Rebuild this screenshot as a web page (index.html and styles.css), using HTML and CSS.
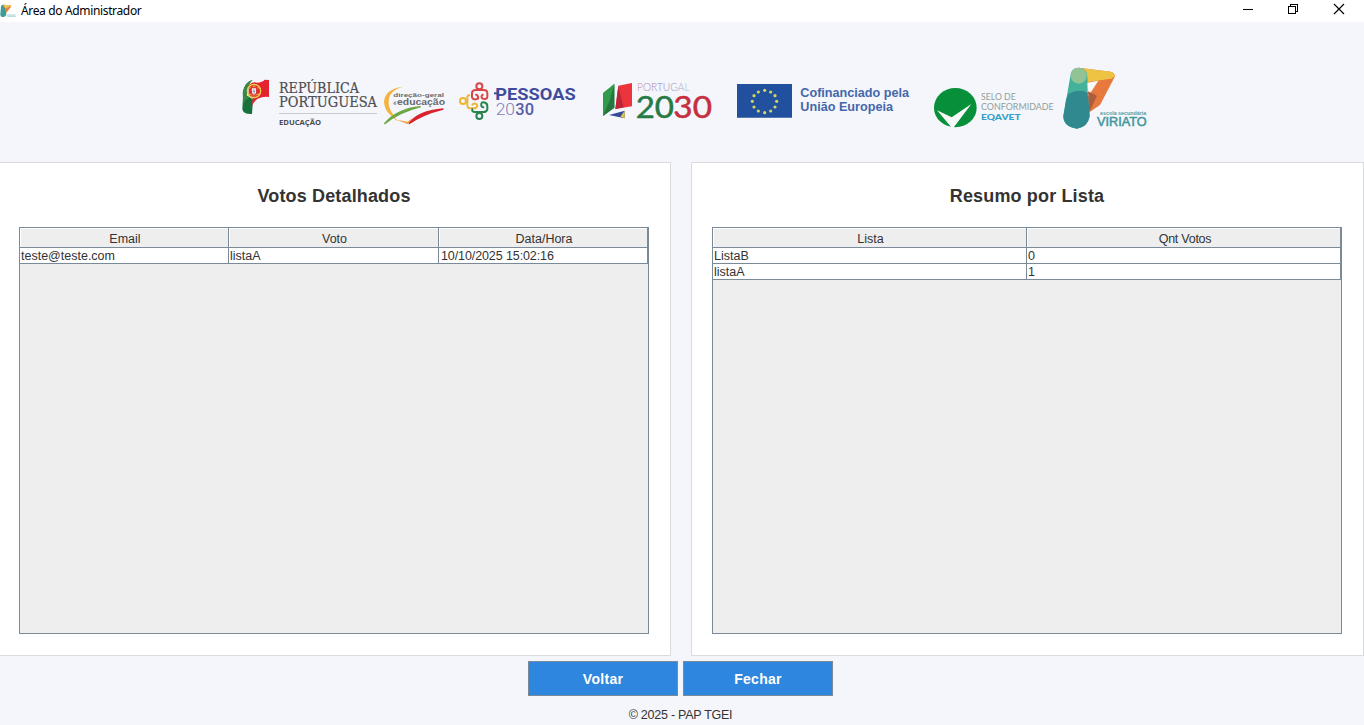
FILE: index.html
```html
<!DOCTYPE html>
<html lang="pt">
<head>
<meta charset="utf-8">
<title>Área do Administrador</title>
<link rel="stylesheet" href="styles.css">
</head>
<body>
<div class="window">
  <header class="titlebar">
    <svg class="app-icon" viewBox="0 0 48 48">
      <path d="M3 17Q4 11 9 11L16 12 19 42Q14 50 6 48 0 46 1 38Z" fill="#3a9c9b"/>
      <path d="M9 11L32 13Q34 15 32 19L18 37 15 23Z" fill="#e8803f"/>
      <path d="M9 11L31 13Q33 15 29 17L16 22Z" fill="#edc54c"/>
      <path d="M21 42H47M22 46H47" stroke="#80bfc4" stroke-width="2"/>
    </svg>
    <span class="title">Área do Administrador</span>
    <svg class="controls" viewBox="0 0 144 22" shape-rendering="crispEdges">
      <path d="M23 9.500H33" stroke="#000"/>
      <path d="M68.500 6.500H75.500V13.500H68.500ZM70.500 6V4.500H77.500V11.500H76" fill="none" stroke="#000"/>
      <path d="M114 4L124 14M124 4L114 14" stroke="#000" stroke-width="1.200" shape-rendering="auto"/>
    </svg>
  </header>

  <div class="logos">
    <svg class="logo republica" viewBox="30 0 426 210">
      <path d="M68 44Q46 50 40 77L37 132Q38 148 66 147L69 103 49 91 56 58Z" fill="#17713c"/>
      <path d="M68 44Q59 50 58 64L50 82Q49 96 58 99Q45 103 40 119L38 82Q44 51 68 44Z" fill="#398846"/>
      <path d="M56 62Q66 49 80 53 98 52 104 44L117 45V96Q100 93 83 101 74 106 66 123L68 100 56 92Z" fill="#e42330"/>
      <circle cx="72" cy="78" r="20" fill="none" stroke="#e9d34b" stroke-width="4"/>
      <path d="M54 70Q72 61 90 70M54 85Q72 96 90 85M72 58V98" fill="none" stroke="#d9c24d" stroke-width="3"/>
      <path d="M62 66H82V82Q80 92 72 93 63 91 62 82Z" fill="#df3b3f"/>
      <path d="M66 70H78V82Q77 88 72 89 67 88 66 82Z" fill="#f5eef0"/>
      <path d="M72 73V86M68 79H76" stroke="#68749b" stroke-width="2"/>
      <g class="slab">
        <text x="147" y="84" font-size="42" textLength="240" lengthAdjust="spacingAndGlyphs">REPÚBLICA</text>
        <text x="147" y="125" font-size="42" textLength="294" lengthAdjust="spacingAndGlyphs">PORTUGUESA</text>
      </g>
      <path d="M147 145.500H441" stroke="#b4b4b8" stroke-width="2"/>
      <text class="sans-semi" x="147" y="181" font-size="21" fill="#4b4b4d" textLength="126" lengthAdjust="spacingAndGlyphs">EDUCAÇÃO</text>
    </svg>

    <svg class="logo dge" viewBox="456 0 219 210">
      <path d="M518 65Q466 72 462 109 463 133 479 148L503 170 487 145Q472 124 477 100 482 76 518 65Z" fill="#f5b23c"/>
      <path d="M463 177Q501 131 572 125 505 142 463 177Z" fill="#6aa842" stroke="#6aa842" stroke-width="4"/>
      <path d="M500 164L534 178 548 158 533 170Z" fill="#f2a044"/>
      <path d="M537 176Q564 138 640 132 579 147 537 176Z" fill="#d9232e" stroke="#d9232e" stroke-width="4"/>
      <g class="arial-bold" fill="#68686b">
        <text x="490" y="97" font-size="18" textLength="152" lengthAdjust="spacingAndGlyphs">direção-geral</text>
        <text x="501" y="121" font-size="25" textLength="144" lengthAdjust="spacingAndGlyphs">educação</text>
        <text transform="translate(499 121) rotate(-90)" font-size="10">da</text>
      </g>
    </svg>

    <svg class="logo pessoas" viewBox="15 0 420 210">
      <g fill="none" stroke-width="6" stroke-linecap="round">
        <g stroke="#dc4545"><circle cx="88" cy="64" r="9"/><path d="M84 101Q70 107 66 97V83Q67 75 77 75H101Q112 75 112 85V96Q110 105 98 101 91 95 98 89M84 101Q86 92 78 89"/></g>
        <g stroke="#efb534"><circle cx="39" cy="108" r="9"/><path d="M58 91Q50 91 52 101V120Q52 131 63 130H75Q84 126 81 119 75 112 67 119"/></g>
        <g stroke="#27854b"><circle cx="88" cy="153" r="9"/><path d="M94 116Q97 109 107 114 113 117 112 128V133Q109 142 98 141H73Q65 140 67 133M94 116Q92 126 100 127"/></g>
      </g>
      <text class="roboto-bold" x="136" y="104" font-size="52" fill="#414b9c" textLength="241" lengthAdjust="spacingAndGlyphs">PESSOAS</text>
      <path d="M132 85H147" stroke="#414b9c" stroke-width="6"/>
      <text class="roboto-light" x="137" y="150" font-size="48" fill="#7d83b9" textLength="58" lengthAdjust="spacingAndGlyphs">20</text>
      <text class="roboto-medium" x="196" y="150" font-size="48" fill="#535ca5" textLength="56" lengthAdjust="spacingAndGlyphs">30</text>
    </svg>

    <svg class="logo p2030" viewBox="15 0 390 210">
      <path d="M39 84L73 56V128L39 153Z" fill="#319b4b"/>
      <path d="M73 56V128L39 153 59 107Z" fill="#26763f"/>
      <path d="M85 62L126 54V124L76 132Z" fill="#ec343d"/>
      <path d="M85 62L101 127 76 132Z" fill="#bd2638"/>
      <path d="M57 150L104 137V160Z" fill="#354a9a"/>
      <path d="M104 137V160L91 155Z" fill="#e5c245"/>
      <linearGradient id="ink" x1="0" x2="1"><stop stop-color="#c88f9c"/><stop offset=".45" stop-color="#8f84b8"/><stop offset="1" stop-color="#b7bbd0"/></linearGradient>
      <text class="lato-light" x="141" y="77" font-size="33" fill="url(#ink)" textLength="158" lengthAdjust="spacingAndGlyphs">PORTUGAL</text>
      <text class="lato" x="137" y="160" font-size="94" fill="#267a44" stroke="#267a44" stroke-width="1.500" textLength="115" lengthAdjust="spacingAndGlyphs">20</text>
      <text class="lato" x="250" y="160" font-size="94" fill="#c52f40" stroke="#c52f40" stroke-width="1.500" textLength="116" lengthAdjust="spacingAndGlyphs">30</text>
    </svg>

    <svg class="logo eu" viewBox="0 0 600 210">
      <path d="M36 57H201V158H36Z" fill="#21509f"/>
      <g fill="#d6d55b">
        <circle cx="119" cy="76" r="4.800"/><circle cx="137" cy="81" r="4.800"/><circle cx="150" cy="92" r="4.800"/><circle cx="155" cy="109" r="4.800"/><circle cx="150" cy="126" r="4.800"/><circle cx="137" cy="138" r="4.800"/><circle cx="119" cy="143" r="4.800"/><circle cx="100" cy="138" r="4.800"/><circle cx="87" cy="126" r="4.800"/><circle cx="82" cy="109" r="4.800"/><circle cx="87" cy="92" r="4.800"/><circle cx="100" cy="81" r="4.800"/>
      </g>
      <g class="arial-bold eu-text" fill="#4467ac" font-size="36">
        <text x="226" y="97" textLength="326" lengthAdjust="spacingAndGlyphs">Cofinanciado pela</text>
        <text x="226" y="138" textLength="278" lengthAdjust="spacingAndGlyphs">União Europeia</text>
      </g>
    </svg>

    <svg class="logo eqavet" viewBox="0 15 405 210">
      <ellipse cx="91" cy="143" rx="64" ry="59" fill="#079039"/>
      <path d="M36 151L80 172 139 132 87 201 79 202Z" fill="#f7faf9"/>
      <g class="lato" fill="#8fa09b" font-size="26">
        <text x="168" y="120" textLength="104" lengthAdjust="spacingAndGlyphs">SELO DE</text>
        <text x="168" y="150" textLength="218" lengthAdjust="spacingAndGlyphs">CONFORMIDADE</text>
      </g>
      <text class="lato-black" x="168" y="180" font-size="25" fill="#359fc9" textLength="119" lengthAdjust="spacingAndGlyphs">EQAVET</text>
    </svg>

    <svg class="logo viriato" viewBox="405 15 288 210">
      <path d="M461 23L557 35Q571 38 569 51L525 135 493 157 486 70 461 70Z" fill="#e8793e"/>
      <path d="M461 23L557 35Q568 38 569 47 565 56 552 57L462 70Z" fill="#edc343"/>
      <path d="M437 43Q440 24 461 23 486 25 487 49L494 169Q488 202 456 206 416 201 415 169Z" fill="#43b29b"/>
      <path d="M430 102Q460 84 489 98L494 169Q488 202 456 206 416 201 415 169L423 119Z" fill="#30898e"/>
      <path d="M487 68L520 62 489 110Z" fill="#f8faf9"/>
      <path d="M489 94L516 107 493 157Z" fill="#ad5d3d"/>
      <circle cx="461" cy="47" r="24" fill="#91c395"/>
      <text class="arial-bold" x="525" y="164" font-size="14" fill="#539ca0" textLength="139" lengthAdjust="spacingAndGlyphs">escola secundária</text>
      <text class="viriato-name" x="516" y="198" font-size="37" textLength="149" lengthAdjust="spacingAndGlyphs">VIRIATO</text>
    </svg>
  </div>

  <main class="panels">
    <section class="panel panel-left">
      <h2>Votos Detalhados</h2>
      <div class="table-view">
        <div class="grid three">
          <div class="th">Email</div><div class="th">Voto</div><div class="th">Data/Hora</div>
          <div class="td">teste@teste.com</div><div class="td">listaA</div><div class="td date">10/10/2025 15:02:16</div>
        </div>
      </div>
    </section>
    <section class="panel panel-right">
      <h2>Resumo por Lista</h2>
      <div class="table-view">
        <div class="grid two">
          <div class="th">Lista</div><div class="th votes">Qnt Votos</div>
          <div class="td">ListaB</div><div class="td">0</div>
          <div class="td">listaA</div><div class="td">1</div>
        </div>
      </div>
    </section>
  </main>

  <div class="actions">
    <button class="btn">Voltar</button>
    <button class="btn">Fechar</button>
  </div>
  <footer class="footer">© 2025 - PAP TGEI</footer>
</div>
</body>
</html>
```

FILE: styles.css
```css
* { box-sizing: border-box; }
body { margin: 0; background: #f4f6fb; }
.window {
  width: 1364px;
  height: 725px;
  overflow: hidden;
  display: flex;
  flex-direction: column;
  background: #f4f6fb;
  color: #333;
  font: 12.5px/15px "Liberation Sans", Arial, sans-serif;
}
.titlebar {
  height: 22px;
  flex: none;
  display: flex;
  background: #fff;
  color: #000;
}
.app-icon { width: 16px; height: 16px; margin-top: 1px; }
.title {
  margin-left: 5px;
  flex: 1;
  font: 12px/22px "Noto Sans", "Open Sans", sans-serif;
  letter-spacing: -0.35px;
}
.controls { width: 144px; height: 22px; }
.logos {
  height: 140px;
  flex: none;
  display: flex;
  padding: 43px 0 0 240px;
}
.logo { height: 70px; flex: none; }
.republica { width: 142px; }
.dge { width: 73px; }
.pessoas { width: 140px; }
.p2030 { width: 130px; }
.eu { width: 200px; }
.eqavet { width: 135px; }
.viriato { width: 96px; }
.slab { font-family: "DejaVu Serif", serif; fill: #4e4d4f; stroke: #4e4d4f; stroke-width: 0.6; }
.sans-semi { font-family: "Open Sans", sans-serif; font-weight: 700; }
.arial-bold { font-family: "Liberation Sans", sans-serif; font-weight: 700; }
.viriato-name {
  font-family: "Liberation Sans", sans-serif;
  fill: #43969c;
  stroke: #43969c;
  stroke-width: 1.5;
}
.roboto-bold { font-family: Roboto, sans-serif; font-weight: 700; }
.roboto-light { font-family: Roboto, sans-serif; font-weight: 300; }
.roboto-medium { font-family: Roboto, sans-serif; font-weight: 500; }
.lato { font-family: Lato, sans-serif; }
.lato-light { font-family: Lato, sans-serif; font-weight: 300; }
.lato-black { font-family: Lato, sans-serif; font-weight: 900; }
.panels {
  height: 494px;
  flex: none;
  display: flex;
  gap: 20px;
}
.panel {
  border: 1px solid #dadbdd;
  background: #fff;
  display: flex;
  flex-direction: column;
}
.panel-left { width: 671px; border-left: 0; padding: 20px 21px 21px 19px; }
.panel-right { width: 673px; padding: 20px 21px 21px 20px; }
h2 {
  margin: 0 0 20px;
  height: 24px;
  font-size: 18px;
  line-height: 26px;
  text-align: center;
  letter-spacing: 0.15px;
}
.table-view {
  flex: 1;
  width: 630px;
  border: 1px solid #7a8a99;
  background: #eee;
}
.grid { display: grid; }
.three { grid-template-columns: 209px 210px 209px; grid-template-rows: 20px 16px; }
.two { grid-template-columns: 314px 314px; grid-template-rows: 20px 16px 16px; }
.th, .td {
  border-right: 1px solid #7a8a99;
  border-bottom: 1px solid #7a8a99;
  white-space: nowrap;
}
.th {
  background: #eee;
  box-shadow: inset 1px 1px #fff;
  line-height: 22px;
  text-align: center;
  padding-left: 2px;
}
.votes { letter-spacing: -0.25px; padding-left: 3px; }
.td { background: #fff; padding-left: 1px; line-height: 16px; }
.date { padding-left: 2px; letter-spacing: -0.1px; }
.actions {
  display: flex;
  gap: 5px;
  padding: 5px 0 0 528px;
}
.btn {
  width: 150px;
  height: 35px;
  padding: 0;
  border: 1px solid #7a8a99;
  background: #2e86de;
  color: #fff;
  font: bold 14px "Liberation Sans", Arial, sans-serif;
  letter-spacing: 0.3px;
}
.footer { padding: 12px 3px 0 0; text-align: center; letter-spacing: -0.25px; }
```
